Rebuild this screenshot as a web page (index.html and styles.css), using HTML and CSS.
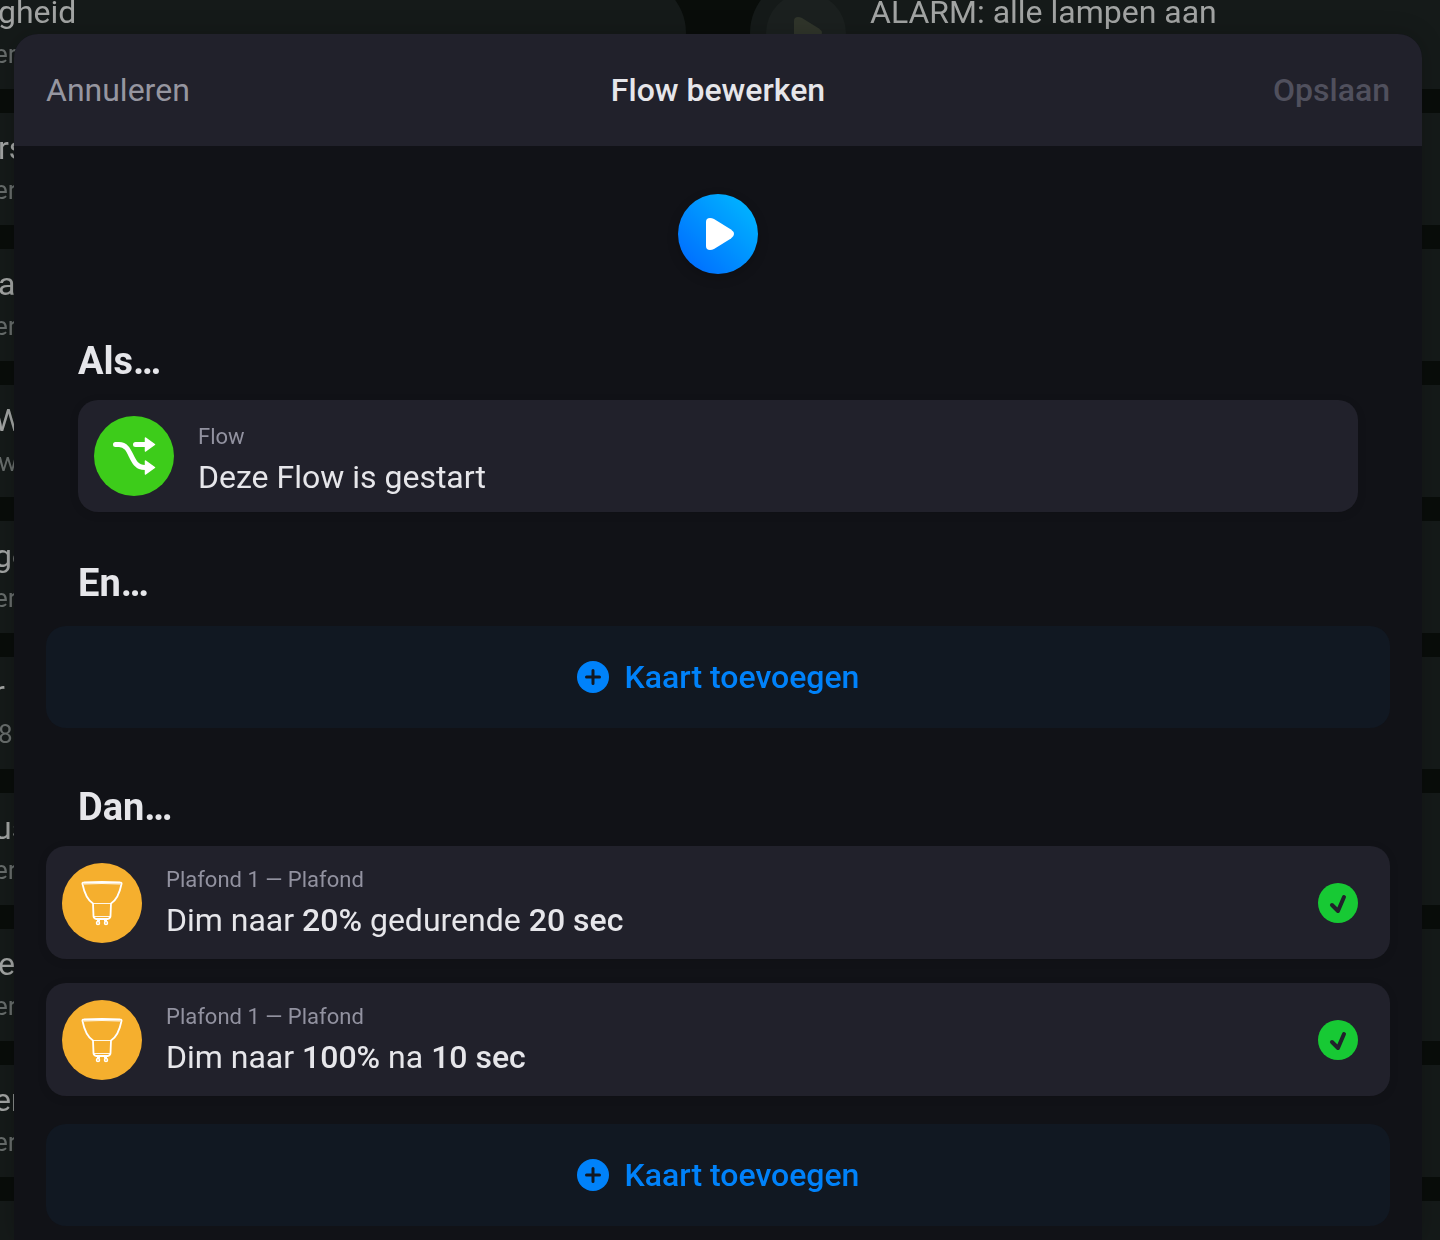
FILE: index.html
```html
<!DOCTYPE html>
<html lang="nl">
<head>
	<meta charset="utf-8">
	<meta name="viewport" content="width=device-width, initial-scale=1">
	<title>Flow bewerken</title>
	<link rel="stylesheet" href="styles.css">
</head>

<body>
	<!-- Flow list behind the sheet -->
	<div class="backdrop" aria-hidden="true">
		<div class="flow"><span class="flow-icon"></span><div><p class="flow-name">gheid</p><p class="flow-sub shift">er</p></div></div>
		<div class="flow">
			<span class="flow-icon">
				<svg width="28" height="32" viewBox="0 0 28 32"><path d="M0 4Q0 0 4 0Q6 0 8 1L25 11.500Q28 13.500 28 16Q28 18.500 25 20.500L8 31Q6 32 4 32Q0 32 0 28Z" fill="#30352b"/></svg>
			</span>
			<div><p class="flow-name">ALARM: alle lampen aan</p></div>
		</div>
		<div class="flow"><span class="flow-icon"></span><div><p class="flow-name">rs</p><p class="flow-sub shift">er</p></div></div>
		<div class="flow"></div>
		<div class="flow"><span class="flow-icon"></span><div><p class="flow-name">a</p><p class="flow-sub shift">er</p></div></div>
		<div class="flow"></div>
		<div class="flow"><span class="flow-icon"></span><div><p class="flow-name shift">W</p><p class="flow-sub">w</p></div></div>
		<div class="flow"></div>
		<div class="flow"><span class="flow-icon"></span><div><p class="flow-name shift">ge</p><p class="flow-sub shift">er</p></div></div>
		<div class="flow"></div>
		<div class="flow"><span class="flow-icon"></span><div><p class="flow-name shift">r</p><p class="flow-sub">8</p></div></div>
		<div class="flow"></div>
		<div class="flow"><span class="flow-icon"></span><div><p class="flow-name shift">us</p><p class="flow-sub shift">er</p></div></div>
		<div class="flow"></div>
		<div class="flow"><span class="flow-icon"></span><div><p class="flow-name">e</p><p class="flow-sub shift">er</p></div></div>
		<div class="flow"></div>
		<div class="flow"><span class="flow-icon"></span><div><p class="flow-name shift">er</p><p class="flow-sub shift">er</p></div></div>
		<div class="flow"></div>
		<div class="flow"></div>
		<div class="flow"></div>
	</div>

	<main class="sheet">
		<header class="sheet-header">
			<button type="button" class="header-button">Annuleren</button>
			<h1 class="sheet-title">Flow bewerken</h1>
			<button type="button" class="header-button save" disabled>Opslaan</button>
		</header>

		<div class="sheet-body">
			<button type="button" class="play" aria-label="Start">
				<svg width="28" height="32" viewBox="0 0 28 32"><path d="M0 4Q0 0 4 0Q6 0 8 1L25 11.500Q28 13.500 28 16Q28 18.500 25 20.500L8 31Q6 32 4 32Q0 32 0 28Z" fill="#fff"/></svg>
			</button>

			<!-- Als -->
			<section class="section">
				<h2 class="section-title">Als…</h2>
				<div class="card trigger">
					<span class="card-icon green">
						<svg width="80" height="80" viewBox="0 0 80 80" fill="none" stroke="#fff" stroke-width="5" stroke-linecap="round" stroke-linejoin="round">
							<path d="M21.500 28.500H25C39 28.500 35 51.500 51 51.500"/>
							<path d="M41.500 28.500H52"/>
							<path d="M51.500 22L60.500 28.500L51.500 35Z" fill="#fff" stroke-width="1.500"/>
							<path d="M51.500 45L60.500 51.500L51.500 58Z" fill="#fff" stroke-width="1.500"/>
						</svg>
					</span>
					<div class="card-text">
						<p class="card-sub">Flow</p>
						<p class="card-name">Deze Flow is gestart</p>
					</div>
				</div>
			</section>

			<!-- En -->
			<section class="section">
				<h2 class="section-title">En…</h2>
				<button type="button" class="add">
					<svg width="32" height="32" viewBox="0 0 32 32"><circle cx="16" cy="16" r="16" fill="#0082fa"/><path d="M16 9.500V22.500M9.500 16H22.500" stroke="#111822" stroke-width="3" stroke-linecap="round"/></svg>
					Kaart toevoegen
				</button>
			</section>

			<!-- Dan -->
			<section class="section">
				<h2 class="section-title">Dan…</h2>
				<div class="cards">
					<div class="card action">
						<span class="card-icon orange">
							<svg width="80" height="80" viewBox="0 0 80 80" fill="none" stroke="#fff" stroke-linejoin="round">
								<path d="M20.500 21Q20 19.500 22 19.500Q40 18.500 58 19.500Q60 19.500 59.500 21C57.500 31 53 38 49 40.500L48.500 53Q48.500 55 46 56H34Q31.500 55 31.500 53L31 40.500C27 38 22.500 31 20.500 21Z" stroke-width="1.800"/>
								<path d="M31 40.500H49M32 53.500H48M22 21Q40 20 58 21" stroke-width="0.900"/>
								<path d="M35 57.500H38M42 57.500H45" stroke-width="2"/>
								<circle cx="36" cy="60" r="1.500" stroke-width="1.500"/><circle cx="44" cy="60" r="1.500" stroke-width="1.500"/>
							</svg>
						</span>
						<div class="card-text">
							<p class="card-sub">Plafond 1 — Plafond</p>
							<p class="card-name">Dim naar <b>20%</b> gedurende <b>20 sec</b></p>
						</div>
						<svg class="check" width="40" height="40" viewBox="0 0 40 40"><circle cx="20" cy="20" r="20" fill="#17c934"/><path d="M14 22L20 28L26 14" fill="none" stroke="#21212b" stroke-width="4" stroke-linecap="round" stroke-linejoin="round"/></svg>
					</div>
					<div class="card action">
						<span class="card-icon orange">
							<svg width="80" height="80" viewBox="0 0 80 80" fill="none" stroke="#fff" stroke-linejoin="round">
								<path d="M20.500 21Q20 19.500 22 19.500Q40 18.500 58 19.500Q60 19.500 59.500 21C57.500 31 53 38 49 40.500L48.500 53Q48.500 55 46 56H34Q31.500 55 31.500 53L31 40.500C27 38 22.500 31 20.500 21Z" stroke-width="1.800"/>
								<path d="M31 40.500H49M32 53.500H48M22 21Q40 20 58 21" stroke-width="0.900"/>
								<path d="M35 57.500H38M42 57.500H45" stroke-width="2"/>
								<circle cx="36" cy="60" r="1.500" stroke-width="1.500"/><circle cx="44" cy="60" r="1.500" stroke-width="1.500"/>
							</svg>
						</span>
						<div class="card-text">
							<p class="card-sub">Plafond 1 — Plafond</p>
							<p class="card-name">Dim naar <b>100%</b> na <b>10 sec</b></p>
						</div>
						<svg class="check" width="40" height="40" viewBox="0 0 40 40"><circle cx="20" cy="20" r="20" fill="#17c934"/><path d="M14 22L20 28L26 14" fill="none" stroke="#21212b" stroke-width="4" stroke-linecap="round" stroke-linejoin="round"/></svg>
					</div>
					<button type="button" class="add">
						<svg width="32" height="32" viewBox="0 0 32 32"><circle cx="16" cy="16" r="16" fill="#0082fa"/><path d="M16 9.500V22.500M9.500 16H22.500" stroke="#111822" stroke-width="3" stroke-linecap="round"/></svg>
						Kaart toevoegen
					</button>
				</div>
			</section>
		</div>
	</main>
</body>
</html>
```

FILE: styles.css
```css
* {
	box-sizing: border-box;
}
body {
	margin: 0;
	padding: 34px 18px 0 14px;
	background: #090d0a;
	color: #e6e6ea;
	font-family: Roboto, sans-serif;
	font-size: 32px;
}
h1, h2, p {
	margin: 0;
}
button {
	border: 0;
	padding: 0;
	background: none;
	color: inherit;
	font: inherit;
	cursor: pointer;
}
b {
	font-weight: 500;
}

/* flow list, runs off the window on both sides */
.backdrop {
	position: fixed;
	top: -23px;
	left: -122px;
	right: -118px;
	display: grid;
	grid-template-columns: 1fr 1fr;
	gap: 24px 64px;
}
.flow {
	display: flex;
	gap: 24px;
	height: 112px;
	padding: 16px;
	border-radius: 56px;
	background: #151a19;
	white-space: nowrap;
}
.flow-icon {
	display: flex;
	align-items: center;
	justify-content: center;
	flex: none;
	width: 80px;
	height: 80px;
	padding-left: 4px;
	border-radius: 50%;
	background: #1b201f;
}
.flow-name {
	color: #a2a4a3;
	line-height: 38px;
}
.flow-sub {
	color: #686d6c;
	font-size: 26px;
	line-height: 46px;
}
.shift {
	margin-left: -4px;
}

/* sheet */
.sheet {
	position: relative;
	min-height: calc(100vh - 34px);
	border-radius: 24px 24px 0 0;
	background: #111217;
	box-shadow: 0 0 24px rgba(0, 0, 0, 0.2);
	overflow: hidden;
}
.sheet-header {
	display: grid;
	grid-template-columns: 1fr auto 1fr;
	align-items: center;
	height: 112px;
	padding: 0 32px;
	background: #21212b;
}
.header-button {
	justify-self: start;
	color: #9696a0;
}
.save {
	justify-self: end;
	color: #50505d;
	font-weight: 500;
}
.sheet-title {
	font-size: 32px;
	font-weight: 500;
}
.sheet-body {
	padding: 48px 32px 12px;
}
.play {
	display: flex;
	align-items: center;
	justify-content: center;
	width: 80px;
	height: 80px;
	margin: 0 auto 64px;
	padding-left: 4px;
	border-radius: 50%;
	background: linear-gradient(45deg, #006eff 10%, #00b4ff 90%);
	box-shadow: 0 4px 12px rgba(0, 0, 0, 0.2);
}

.section {
	margin-bottom: 48px;
}
.section:last-child {
	margin-bottom: 0;
}
.section-title {
	margin: 0 32px 16px;
	font-size: 38px;
	font-weight: 700;
	line-height: 46px;
}
.cards {
	display: flex;
	flex-direction: column;
	gap: 24px;
}
.card {
	display: flex;
	align-items: center;
	gap: 24px;
	min-height: 112px;
	padding: 0 32px 0 16px;
	border-radius: 20px;
	background: #21212b;
	box-shadow: 0 2px 10px rgba(0, 0, 0, 0.1);
}
.trigger {
	margin: 0 32px;
}
.action {
	min-height: 113px;
}
.card-icon {
	flex: none;
	width: 80px;
	height: 80px;
	border-radius: 50%;
}
.green {
	background: #3dcc1a;
}
.orange {
	background: #f5af2e;
}
.card-text {
	flex: 1;
	padding-top: 2px;
}
.trigger .card-text {
	padding-top: 10px;
}
.card-sub {
	margin-bottom: 8px;
	color: #9292a0;
	font-size: 22px;
	line-height: 24px;
}
.card-name {
	line-height: 40px;
}
.check {
	flex: none;
}

.add {
	display: flex;
	align-items: center;
	justify-content: center;
	gap: 16px;
	width: 100%;
	height: 102px;
	margin: 20px 0 56px;
	border-radius: 20px;
	background: #111822;
	color: #0082fa;
	font-weight: 500;
}
.cards .add {
	margin: 4px 0 0;
}
```
